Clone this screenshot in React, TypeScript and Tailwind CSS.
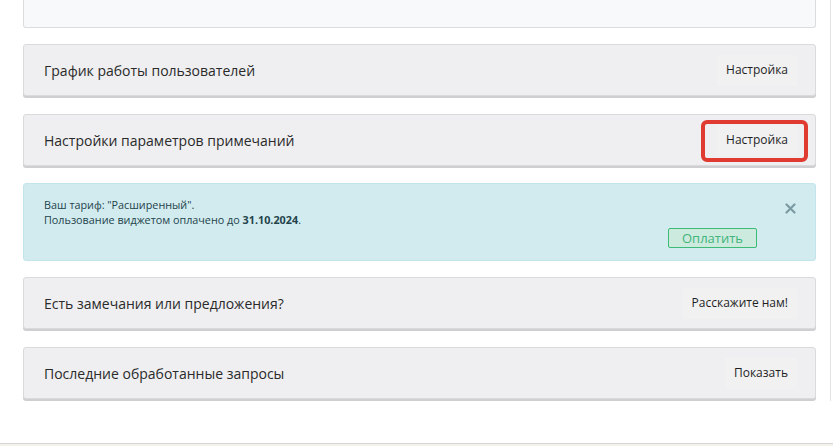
import React from "react";

type Row = {
  title: string;
  action: string;
  highlight?: boolean;
};

const rowsTop: Row[] = [
  { title: "График работы пользователей", action: "Настройка" },
  { title: "Настройки параметров примечаний", action: "Настройка", highlight: true },
];

const rowsBottom: Row[] = [
  { title: "Есть замечания или предложения?", action: "Расскажите нам!" },
  { title: "Последние обработанные запросы", action: "Показать" },
];

function SettingRow({ row }: { row: Row }) {
  return (
    <div className="h-[52px] mb-[2px] rounded-[3px] border border-[#dadadc] bg-[#efeff1] shadow-[0_2px_0_#cfcfd1] pl-5 pr-[18px] flex items-center justify-between">
      <span className="text-[14px] text-[#2a2a2a]">{row.title}</span>
      <div className="relative">
        <button className="h-[31px] px-[9px] rounded-[2px] bg-[#f1f1f2] text-[12px] text-[#1f1f1f]">
          {row.action}
        </button>
        {row.highlight && (
          <span className="absolute -left-[16px] -right-[11px] -top-[5px] -bottom-[6px] rounded-[6px] border-[4px] border-[#e03b30] pointer-events-none" />
        )}
      </div>
    </div>
  );
}

function TariffAlert() {
  return (
    <div className="-mt-[1px] h-[78px] rounded-[3px] border border-[#c3e4ea] bg-[#d2ebef] pl-5 pr-[18px] pt-[13px] pb-[12px] grid grid-cols-[1fr_auto_auto]">
      <div className="text-[10.8px] leading-[15px] text-[#23434b]">
        <p>Ваш тариф: "Расширенный".</p>
        <p>
          Пользование виджетом оплачено до <b className="font-bold">31.10.2024</b>.
        </p>
      </div>
      <button className="self-end mr-[28px] w-[89px] h-[20px] rounded-[2px] border border-[#3dba76] bg-[#cdeadf] text-[13px] leading-none text-[#3fb57a]">
        Оплатить
      </button>
      <button className="self-start mt-[6px] mr-[1px] text-[#7b9aa1]">
        <svg width="11" height="11" viewBox="0 0 11 11">
          <path d="M1.5 1.5 L9.5 9.5 M9.5 1.5 L1.5 9.5" stroke="currentColor" strokeWidth="2.2" strokeLinecap="round" />
        </svg>
      </button>
    </div>
  );
}

export default function App() {
  return (
    <div className="h-[446px] w-[833px] overflow-hidden bg-white flex flex-col font-['Open_Sans','Liberation_Sans',sans-serif]">
      <div className="w-[831px] border-r border-[#e4e4e6] pl-[23px] pr-[14px] flex flex-col gap-4">
        {/* tail of the panel above */}
        <div className="h-[28px] rounded-b-[3px] border border-t-0 border-[#dcdcde] bg-[#f8f9fa]" />
        {rowsTop.map((r) => (
          <SettingRow key={r.title} row={r} />
        ))}
        <TariffAlert />
        {rowsBottom.map((r) => (
          <SettingRow key={r.title} row={r} />
        ))}
      </div>
      <div className="mt-auto h-[3px] border-t border-[#d6d6d6] bg-[#f3f1ec]" />
    </div>
  );
}
